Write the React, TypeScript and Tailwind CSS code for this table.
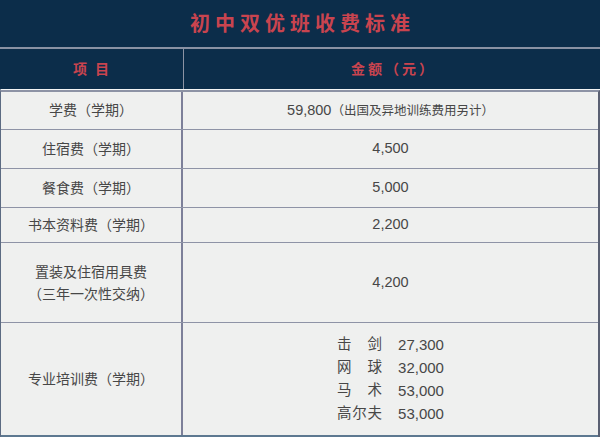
import React from "react";

const font = "font-['Liberation_Sans','Noto_Sans_CJK_SC',sans-serif]";

type Row = { label: React.ReactNode; value: React.ReactNode; h: string };

const sports = [
  { name: ["击", "剑"], fee: "27,300" },
  { name: ["网", "球"], fee: "32,000" },
  { name: ["马", "术"], fee: "53,000" },
  { name: ["高", "尔", "夫"], fee: "53,000" },
];

const rows: Row[] = [
  {
    label: "学费（学期）",
    value: (
      <span>
        59,800<span className="text-[12.5px]">（出国及异地训练费用另计）</span>
      </span>
    ),
    h: "h-[38px]",
  },
  { label: "住宿费（学期）", value: "4,500", h: "h-[39px]" },
  { label: "餐食费（学期）", value: "5,000", h: "h-[39px]" },
  { label: "书本资料费（学期）", value: "2,200", h: "h-[35px]" },
  {
    label: (
      <span className="flex flex-col items-center leading-[22px]">
        <span>置装及住宿用具费</span>
        <span>（三年一次性交纳）</span>
      </span>
    ),
    value: "4,200",
    h: "h-[80px]",
  },
  {
    label: "专业培训费（学期）",
    value: (
      <div className="flex flex-col leading-[23px]">
        {sports.map((s) => (
          <div key={s.fee + s.name.join("")} className="flex items-center gap-[16px]">
            <span className="flex w-[45px] justify-between">
              {s.name.map((c) => (
                <span key={c}>{c}</span>
              ))}
            </span>
            <span className="text-[15px]">{s.fee}</span>
          </div>
        ))}
      </div>
    ),
    h: "h-[114px]",
  },
];

export default function App() {
  return (
    <div className={`w-[600px] h-[437px] overflow-hidden bg-[#eff0ef] ${font}`}>
      <div className="h-[49px] bg-[#0c2d4a] flex items-center justify-center border-b-2 border-[#8a92a4]">
        <span className="text-[20px] font-semibold tracking-[5px] text-[#c9444f] pl-[5px]">
          初中双优班收费标准
        </span>
      </div>
      <div className="h-[41px] bg-[#0c2d4a] flex border-b border-[#f4f5f5] border-l border-l-[#0c2d4a]">
        <div className="w-[183px] flex items-center justify-center border-r border-[#8c93a4] text-[14px] font-semibold tracking-[2px] text-[#c9444f]">
          项 目
        </div>
        <div className="flex-1 flex items-center justify-center text-[14px] font-semibold tracking-[3px] text-[#c9444f] pl-[3px]">
          金额（元）
        </div>
      </div>
      <div className="border-t-2 border-[#8d93a5] border-l border-l-[#5c6b82] border-r-2 border-r-[#5a6072]">
        {rows.map((r, i) => (
          <div
            key={i}
            className={`flex ${r.h} ${
              i === rows.length - 1
                ? "border-b-2 border-[#5d7890]"
                : "border-b-[1.5px] border-[#8e93a6]"
            } text-[14px] text-[#474747]`}
          >
            <div className="w-[182px] flex items-center justify-center border-r-2 border-[#7d8099]">
              {r.label}
            </div>
            <div className="flex-1 flex items-center justify-center text-[14.5px]">
              {r.value}
            </div>
          </div>
        ))}
      </div>
    </div>
  );
}
